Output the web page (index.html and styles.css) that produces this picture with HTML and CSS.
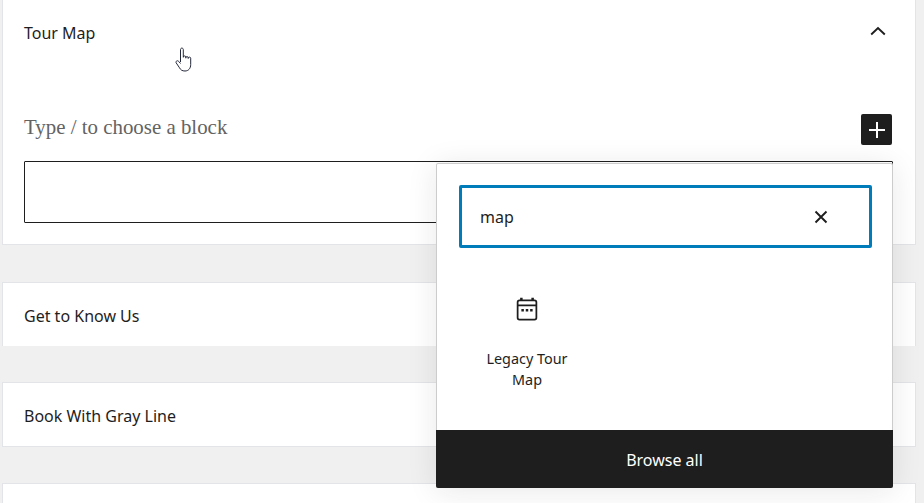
FILE: index.html
```html
<!DOCTYPE html>
<html lang="en">
<head>
<meta charset="utf-8">
<title>Tour Map</title>
<link rel="stylesheet" href="styles.css">
</head>
<body>
<main class="page">
  <section class="panel panel-open">
    <header class="panel-head">
      <span class="panel-title">Tour Map</span>
      <svg class="chevron" width="24" height="24" viewBox="0 0 24 24"><path d="M5.200 15.500 12 9l6.800 6.500" fill="none" stroke="#1e1e1e" stroke-width="1.900"/></svg>
    </header>
    <div class="panel-body">
      <div class="prompt-row">
        <span class="prompt">Type / to choose a block</span>
        <button class="add-btn" type="button" aria-label="Add block">
          <svg width="24" height="24" viewBox="0 0 24 24"><path d="M12 4v16M4 12h16" fill="none" stroke="#fff" stroke-width="2"/></svg>
        </button>
      </div>
      <div class="block-box"></div>
    </div>
  </section>
  <section class="panel panel-closed panel-nobottom"><span class="panel-title">Get to Know Us</span></section>
  <section class="panel panel-closed panel-third"><span class="panel-title">Book With Gray Line</span></section>
  <section class="panel panel-closed panel-last"></section>
</main>

<svg class="cursor" width="20" height="26" viewBox="0 0 20 26"><path d="M5.500 15V2.600c0-2 2.800-2 2.800 0V10.500M8.300 10c0-1.400 2.500-1.400 2.500 0v1.300M10.800 10.600c0-1.300 2.400-1.300 2.400 0v1.200M13.200 11c0-1.200 2.500-1.200 2.500.2v6.300c0 4-2.300 6.500-5.700 6.500-2.800 0-4.300-1-5.500-3.200L1.200 15.900c-.9-1.600 1.300-3 2.500-1.500L5.500 16.500" fill="#fff" stroke="#23283a" stroke-width="1" stroke-linejoin="round"/></svg>

<aside class="popover">
  <div class="popover-main">
    <div class="search">
      <span class="search-text">map</span>
      <svg class="search-clear" width="24" height="24" viewBox="0 0 24 24"><path d="M6.500 6.500l11 11M17.500 6.500l-11 11" fill="none" stroke="#1e1e1e" stroke-width="1.900"/></svg>
    </div>
    <div class="result">
      <svg class="result-icon" width="30" height="30" viewBox="0 0 24 24">
        <path d="M4.500 6.500A1.500 1.500 0 0 1 6 5h12a1.500 1.500 0 0 1 1.500 1.500v12.500A1.500 1.500 0 0 1 18 20.500H6A1.500 1.500 0 0 1 4.500 19zM5 9h14" fill="none" stroke="#1e1e1e" stroke-width="1.400"/>
        <path d="M7.500 3v2.500M16.500 3v2.500" fill="none" stroke="#1e1e1e" stroke-width="2"/>
        <path d="M7.500 12h2v2h-2zM11 12h2v2h-2zM14.500 12h2v2h-2z" fill="#1e1e1e"/>
      </svg>
      <span class="result-label">Legacy Tour Map</span>
    </div>
  </div>
  <div class="browse">Browse all</div>
</aside>
</body>
</html>
```
FILE: styles.css
```css
* { box-sizing: border-box; }
html, body { margin: 0; height: 100%; overflow: hidden; }
body {
  position: relative;
  background: #f0f0f0;
  font-family: "Noto Sans", "Open Sans", sans-serif;
  font-size: 16px;
  color: #1e1e1e;
}
.page { padding: 0 8px 0 2px; }
.panel {
  background: #fff;
  border: 1px solid #e2e4e7;
}
.panel-open { height: 245px; border-top: 0; padding: 0 22px 0 21px; }
.panel-head {
  height: 65px;
  display: flex;
  justify-content: space-between;
  align-items: center;
}
.chevron { margin-right: 3px; margin-top: -4px; }
.panel-title { font-size: 16px; line-height: 22px; }
.panel-body { padding-top: 49px; }
.prompt-row {
  display: flex;
  justify-content: space-between;
  align-items: flex-start;
  height: 47px;
}
.prompt {
  font-family: "Liberation Serif", serif;
  font-size: 20.9px;
  line-height: 26px;
  color: #636363;
}
.add-btn {
  width: 31px;
  height: 31px;
  margin-right: 1px;
  padding: 0;
  border: 0;
  border-radius: 2px;
  background: #1e1e1e;
  display: flex;
  align-items: center;
  justify-content: center;
}
.block-box {
  height: 62px;
  border: 1px solid #1e1e1e;
  border-radius: 1px;
}
.panel-closed {
  display: flex;
  align-items: center;
  padding: 2px 0 0 21px;
  height: 65px;
  margin-top: 37px;
}
.panel-nobottom { border-bottom: 0; height: 64px; }
.panel-third { margin-top: 36px; }
.panel-last { height: 40px; margin-top: 36px; }
.cursor { position: absolute; left: 175px; top: 47px; }
.popover {
  position: absolute;
  left: 436px;
  top: 163px;
  width: 457px;
  height: 325px;
  background: #fff;
  border: 1px solid #ccc;
  border-bottom: 0;
  border-radius: 2px;
  box-shadow: 0 3px 30px rgba(25, 30, 35, 0.1);
  display: flex;
  flex-direction: column;
}
.popover-main { flex: 1; padding: 21px 20px 0 22px; }
.search {
  height: 63px;
  border: 3px solid #007cba;
  border-radius: 2px;
  display: flex;
  align-items: center;
  justify-content: space-between;
  padding: 0 36px 0 18px;
}
.search-text { font-size: 16px; line-height: 22px; }
.result {
  width: 110px;
  margin: 46px 0 0 13px;
  display: flex;
  flex-direction: column;
  align-items: center;
  text-align: center;
}
.result-label { font-size: 14.4px; line-height: 21px; margin-top: 24px; width: 90px; }
.browse {
  height: 58px;
  margin: 0 -1px;
  background: #1e1e1e;
  color: #fff;
  font-size: 16px;
  line-height: 60px;
  text-align: center;
  border-radius: 0 0 2px 2px;
}
```
